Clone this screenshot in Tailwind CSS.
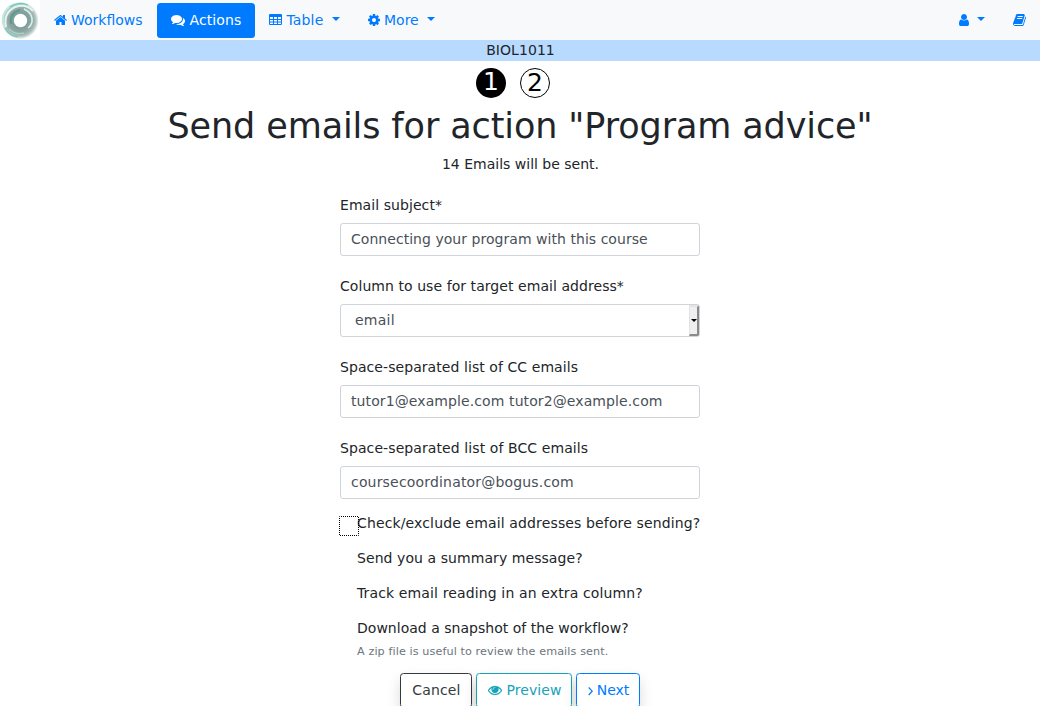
<!DOCTYPE html>
<html lang="en">
<head>
<meta charset="utf-8">
<title>Send emails</title>
<script src="https://cdn.jsdelivr.net/npm/@tailwindcss/browser@4"></script>
</head>
<body class="h-[706px] overflow-hidden bg-white font-['DejaVu_Sans',sans-serif] text-[14px] leading-[21px] text-[#212529]">
<nav class="flex h-10 items-center bg-[#f8f9fa] text-[#007bff]">
  <svg class="h-10 w-10 shrink-0" viewBox="0 0 40 40" fill="none">
    <defs><radialGradient id="ring" gradientUnits="userSpaceOnUse" cx="20" cy="20.500" r="18.500"><stop offset=".35" stop-color="#7b9d98"/><stop offset=".6" stop-color="#8da5a2"/><stop offset=".82" stop-color="#a9bbb8"/><stop offset="1" stop-color="#eef8f6"/></radialGradient></defs>
    <rect width="40" height="40" fill="#fff"/>
    <circle cx="20" cy="20.500" r="18.500" fill="url(#ring)"/>
    <path d="M3 24A17.500 17.500 0 0 1 14 4" stroke="#b9ede2" stroke-width="1.500"/>
    <path d="M6 27Q3 13 15 7Q26 3 33 11" stroke="#e4f5f1" stroke-width="2"/>
    <path d="M10 7Q19 1 28 5M5 28Q9 36 18 37" stroke="#62cdb8" stroke-width="1.200"/>
    <path d="M11 24Q9 13 20 10" stroke="#5e9a8f" stroke-width="2"/>
    <path d="M24 9Q33 13 32 22Q31 26 28 28" stroke="#d8f3ed" stroke-width="1.500"/>
    <path d="M9 29Q15 35 24 33" stroke="#a9ddd2" stroke-width="1"/>
    <circle cx="20.500" cy="20.500" r="6.700" fill="#fff"/>
  </svg>
  <a class="flex h-[35px] items-center gap-[4px] pr-[14.450px] pl-[14px]">
    <svg class="h-[14px] w-[13px]" viewBox="64 0 1664 1792" fill="currentColor"><path d="M1472 992v480q0 26-19 45t-45 19h-384v-384h-256v384h-384q-26 0-45-19t-19-45v-480q0-1 .5-3t.5-3l575-474 575 474q1 2 1 6zm223-69l-62 74q-8 9-21 11h-3q-13 0-21-7l-692-577-692 577q-12 8-24 7-13-2-21-11l-62-74q-8-10-7-23.500t11-21.500l719-599q32-26 76-26t76 26l244 204v-195q0-14 9-23t23-9h192q14 0 23 9t9 23v408l219 182q10 8 11 21.500t-7 23.500z"/></svg>
    <span>Workflows</span>
  </a>
  <a class="mt-px flex h-[35px] w-[98px] items-center gap-[4.450px] rounded-[3.500px] bg-[#007bff] px-[14px] text-white">
    <svg class="mb-px h-[14px] w-[14px] shrink-0" viewBox="0 0 1792 1792" fill="currentColor"><path d="M1408 768q0 139-94 257t-256.500 186.500-353.500 68.500q-86 0-176-16-124 88-278 128-36 9-86 16h-3q-11 0-20.500-8t-11.500-21q-1-3-1-6.500t.5-6.500 2-6l2.500-5 3.500-5.500 4-5 4.500-5 4-4.500q5-6 23-25t26-29.500 22.500-29 25-38.500 20.500-44q-124-72-195-177t-71-224q0-139 94-257t256.500-186.500 353.500-68.500 353.500 68.500 256.500 186.500 94 257zm384 256q0 120-71 224.500t-195 176.500q10 24 20.500 44t25 38.500 22.500 29 26 29.500 23 25q1 1 4 4.500t4.500 5 4 5 3.500 5.500l2.500 5 2 6 .5 6.500-1 6.500q-3 14-13 22t-22 7q-50-7-86-16-154-40-278-128-90 16-176 16-271 0-472-132 58 4 88 4 161 0 309-45t264-129q125-92 192-212t67-254q0-77-23-152 129 71 204 178t75 230z"/></svg>
    <span class="-mt-px tracking-[0.100px]">Actions</span>
  </a>
  <a class="flex h-[35px] items-center gap-[4.450px] pr-[14px] pl-[14px]">
    <svg class="h-[14px] w-[13px]" viewBox="0 0 13 14" fill="currentColor"><path fill-rule="evenodd" d="M1 1H12Q13 1 13 2V11Q13 12 12 12H1Q0 12 0 11V2Q0 1 1 1ZM1 4V6H4V4ZM5 4V6H8V4ZM9 4V6H12V4ZM1 7V8.500H4V7ZM5 7V8.500H8V7ZM9 7V8.500H12V7ZM1 9.500V11H4V9.500ZM5 9.500V11H8V9.500ZM9 9.500V11H12V9.500Z"/></svg>
    <span class="tracking-[0.150px]">Table</span>
    <span class="mb-[2px] ml-[3.700px] h-0 w-0 border-x-[4.200px] border-t-[4.200px] border-x-transparent border-t-current"></span>
  </a>
  <a class="flex h-[35px] items-center gap-[4.450px] px-[14px]">
    <svg class="h-[14px] w-[12px]" viewBox="128 0 1536 1792" fill="currentColor"><path d="M1152 896q0-106-75-181t-181-75-181 75-75 181 75 181 181 75 181-75 75-181zm512-109v222q0 12-8 23t-20 13l-185 28q-19 54-39 91 35 50 107 138 10 12 10 25t-9 23q-27 37-99 108t-94 71q-12 0-26-9l-138-108q-44 23-91 38-16 136-29 186-7 28-36 28h-222q-14 0-24.500-8.500t-11.500-21.500l-28-184q-49-16-90-37l-141 107q-10 9-25 9-14 0-25-11-126-114-165-168-7-10-7-23 0-12 8-23 15-21 51-66.500t54-70.500q-27-50-41-99l-183-27q-13-2-21-12.500t-8-23.500v-222q0-12 8-23t19-13l186-28q14-46 39-92-40-57-107-138-10-12-10-24 0-10 9-23 26-36 98.500-107.500t94.500-71.500q13 0 26 10l138 107q44-23 91-38 16-136 29-186 7-28 36-28h222q14 0 24.500 8.500t11.500 21.500l28 184q49 16 90 37l142-107q9-9 24-9 13 0 25 10 129 119 165 170 7 8 7 22 0 12-8 23-15 21-51 66.500t-54 70.500q26 50 41 98l183 28q13 2 21 12.500t8 23.500z"/></svg>
    <span>More</span>
    <span class="mb-[2px] ml-[3.500px] h-0 w-0 border-x-[4.200px] border-t-[4.200px] border-x-transparent border-t-current"></span>
  </a>
  <a class="ml-auto flex h-[35px] items-center gap-2 px-[14px]">
    <svg class="h-[14px] w-[10px]" viewBox="256 0 1280 1792" fill="currentColor"><path d="M1536 1399q0 109-62.500 187t-150.500 78h-854q-88 0-150.500-78t-62.500-187q0-85 8.500-160.500t31.500-152 58.500-131 94-89 134.500-34.500q131 128 313 128t313-128q76 0 134.500 34.500t94 89 58.500 131 31.500 152 8.500 160.500zm-256-887q0 159-112.500 271.500t-271.500 112.500-271.500-112.500-112.500-271.500 112.500-271.500 271.500-112.500 271.500 112.500 112.500 271.500z"/></svg>
    <span class="mb-[2px] h-0 w-0 border-x-[4.200px] border-t-[4.200px] border-x-transparent border-t-current"></span>
  </a>
  <a class="flex h-[35px] items-center px-[14px]">
    <svg class="h-[14px] w-[13px]" viewBox="64 0 1664 1792" fill="currentColor"><path d="M1703 478q40 57 18 129l-275 906q-19 64-76.500 107.500t-122.500 43.500h-923q-77 0-148.500-53.500t-99.500-131.500q-24-67-2-127 0-4 3-27t4-37q1-8-3-21.500t-3-19.500q2-11 8-21t16.500-23.500 16.500-23.500q23-38 45-91.500t30-91.500q3-10 .5-30t-.5-28q3-11 17-28t17-23q21-36 42-92t25-90q1-9-2.500-32t.5-28q4-13 22-30.500t22-22.500q19-26 42.500-84.500t27.500-96.500q1-8-3-25.500t-2-26.500q2-8 9-18t18-23 17-21q8-12 16.500-30.500t15-35 16-36 19.500-32 26.500-23.500 36-11.500 47.500 5.500l-1 3q38-9 51-9h761q74 0 114 56t18 130l-274 906q-36 119-71.500 153.500t-128.500 34.500h-869q-27 0-38 15-11 16-1 43 24 70 144 70h923q29 0 56-15.500t35-41.500l300-987q7-22 5-57 38 15 59 43zm-1064 2q-4 13 2 22.500t20 9.500h608q13 0 25.500-9.500t16.500-22.500l21-64q4-13-2-22.500t-20-9.500h-608q-13 0-25.500 9.500t-16.500 22.500zm-83 256q-4 13 2 22.500t20 9.500h608q13 0 25.500-9.500t16.500-22.500l21-64q4-13-2-22.500t-20-9.500h-608q-13 0-25.500 9.500t-16.500 22.500z"/></svg>
  </a>
</nav>
<div class="h-[21px] bg-[#b8daff] pl-px text-center leading-[20px] tracking-[0.060px]">BIOL1011</div>
<div class="flex gap-[14px] pt-[7px] pl-[476px] text-[25px] text-black">
  <span class="flex h-[30px] w-[30px] justify-center rounded-full bg-black leading-[27px] text-white">1</span>
  <span class="flex h-[30px] w-[30px] justify-center rounded-full border border-black leading-[28px]">2</span>
</div>
<h1 class="mt-[7px] text-center text-[35px] leading-[42px] tracking-[-0.105px]">Send emails for action "Program advice"</h1>
<p class="mt-[7px] pl-px text-center">14 Emails will be sent.</p>
<form class="mx-auto mt-5 w-[360px]">
  <div class="flex flex-col gap-5">
    <div><div class="tracking-[0.070px]">Email subject*</div><div class="mt-[7px] h-[33px] rounded-[3px] border border-[#ced4da] px-[10px] leading-[31px] tracking-[0.040px] text-[#495057]">Connecting your program with this course</div></div>
    <div><div class="tracking-[0.060px]">Column to use for target email address*</div><div class="mt-[7px] flex h-[33px] items-center justify-between overflow-hidden rounded-[3px] border border-[#ced4da] pl-[14px] text-[#495057]"><span class="tracking-[0.250px]">email</span><span class="flex h-[31px] w-[10px] items-center justify-center border-t-2 border-r-2 border-b-2 border-l border-t-[#e3e3e3] border-r-[#8b8b8b] border-b-[#8b8b8b] border-l-[#e3e3e3] bg-[#efefef]"><span class="border-x-[3px] border-t-[3px] border-x-transparent border-t-black"></span></span></div></div>
    <div><div class="tracking-[0.070px]">Space-separated list of CC emails</div><div class="mt-[7px] h-[33px] rounded-[3px] border border-[#ced4da] px-[10px] leading-[31px] tracking-[0.100px] text-[#495057]">tutor1@example.com tutor2@example.com</div></div>
    <div><div class="tracking-[0.090px]">Space-separated list of BCC emails</div><div class="mt-[7px] h-[33px] rounded-[3px] border border-[#ced4da] px-[10px] leading-[31px] tracking-[0.180px] text-[#495057]">coursecoordinator@bogus.com</div></div>
  </div>
  <div class="mt-[14px] flex flex-col gap-[14px] pl-[17px]">
    <div class="relative whitespace-nowrap tracking-[0.135px]"><svg class="absolute top-[3px] -left-[18px] h-5 w-5" viewBox="0 0 20 20" fill="none"><rect x=".5" y=".5" width="19" height="19" stroke="#000" stroke-dasharray="1 1" stroke-dashoffset=".5"/></svg>Check/exclude email addresses before sending?</div>
    <div class="tracking-[0.070px]">Send you a summary message?</div>
    <div class="tracking-[0.130px]">Track email reading in an extra column?</div>
    <div class="tracking-[0.020px]">Download a snapshot of the workflow?</div>
  </div>
  <div class="mt-[3.500px] pl-[17px] text-[11.200px] leading-[17px] tracking-[0.100px] text-[#6c757d]">A zip file is useful to review the emails sent.</div>
</form>
<div class="mt-[13.500px] flex justify-center gap-1">
  <a class="flex h-[35px] w-[72px] items-center justify-center rounded-[3.500px] border border-[#343a40] bg-white pl-px tracking-[0.150px] text-[#343a40] shadow-[0_7px_14px_rgba(0,0,0,0.15)]">Cancel</a>
  <a class="flex h-[35px] w-[96px] items-center justify-center gap-[4px] rounded-[3.500px] border border-[#17a2b8] bg-white pl-[2px] text-[#17a2b8] shadow-[0_7px_14px_rgba(0,0,0,0.15)]"><svg class="mb-[2px] h-[14px] w-[14px] shrink-0" viewBox="0 0 1792 1792" fill="currentColor" stroke="currentColor" stroke-width="30"><path d="M1664 960q-152-236-381-353 61 104 61 225 0 185-131.500 316.500t-316.500 131.500-316.500-131.500-131.500-316.500q0-121 61-225-229 117-381 353 133 205 333.500 326.500t434.500 121.500 434.500-121.500 333.500-326.500zm-720-384q0-20-14-34t-34-14q-125 0-214.500 89.500t-89.500 214.500q0 20 14 34t34 14 34-14 14-34q0-86 61-147t147-61q20 0 34-14t14-34zm848 384q0 34-20 69-140 230-376.500 368.500t-499.500 138.500-499.500-139-376.500-368q-20-35-20-69t20-69q140-229 376.500-368t499.500-139 499.500 139 376.500 368q20 35 20 69z"/></svg><span class="tracking-[0.100px]">Preview</span></a>
  <a class="flex h-[35px] w-[64px] items-center justify-center gap-[4px] rounded-[3.500px] border border-[#007bff] bg-white pl-px text-[#007bff] shadow-[0_7px_14px_rgba(0,0,0,0.15)]"><svg class="h-[14px] w-[5px]" viewBox="0 0 5 14" fill="none" stroke="currentColor" stroke-width="1.200"><path d="M.7 3.500L4.200 7.200L.7 11"/></svg><span>Next</span></a>
</div>
</body>
</html>
